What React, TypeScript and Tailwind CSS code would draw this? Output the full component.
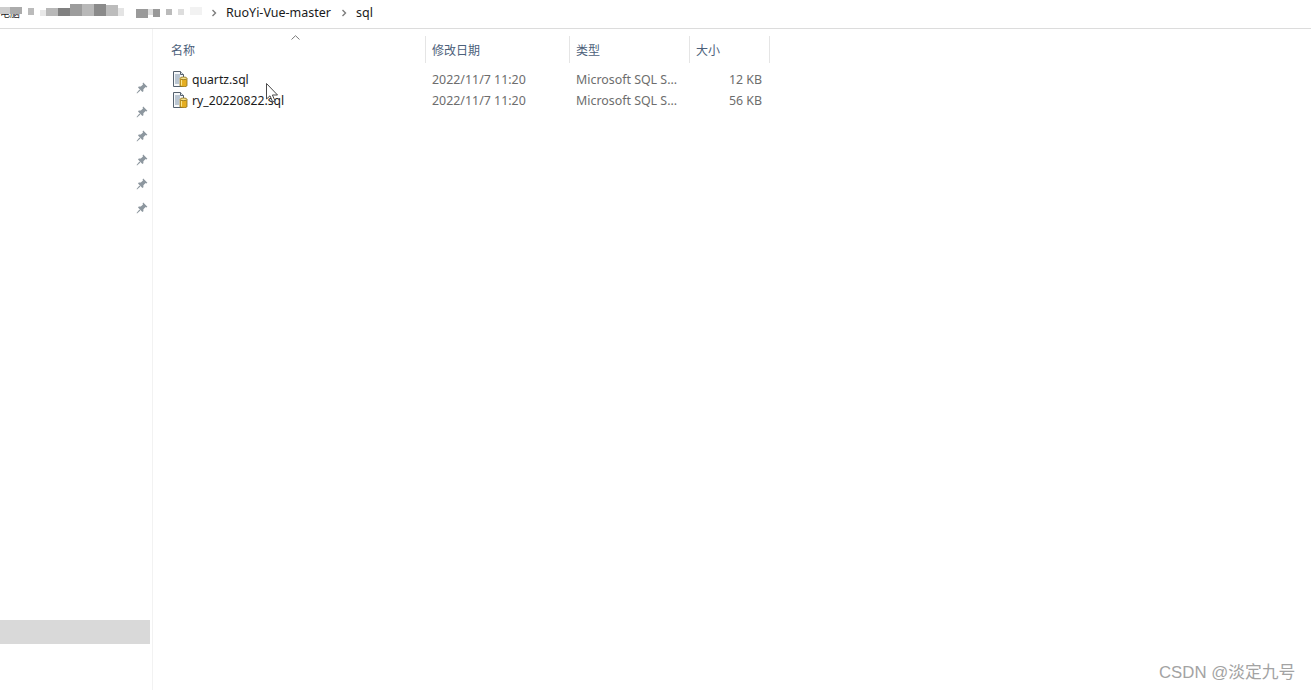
const uiFont = "font-['Noto_Sans','Noto_Sans_CJK_SC',sans-serif]";

const pins = [88, 112, 136, 160, 184, 208];

const files = [
  { name: "quartz.sql", date: "2022/11/7 11:20", kind: "Microsoft SQL S...", size: "12 KB" },
  { name: "ry_20220822.sql", date: "2022/11/7 11:20", kind: "Microsoft SQL S...", size: "56 KB" },
];

function Pin() {
  return (
    <svg width="12" height="12" viewBox="0 0 12 12" className="fill-[#8d979f]">
      <path d="M7.2 0.6 11.4 4.8 10.4 5.4 9.6 5 7.4 7.2 7.4 9.2 6.4 10 2 5.6 2.8 4.6 4.8 4.6 7 2.4 6.6 1.6Z" />
      <path d="M3.4 7.6 4.4 8.6 1 11.4 0.6 11Z" />
    </svg>
  );
}

function SqlIcon() {
  return (
    <svg width="16" height="16" viewBox="0 0 16 16" className="shrink-0">
      <path d="M1.5 0.5H8.5L11.5 3.5V15.5H1.5Z" fill="#f6f8fa" stroke="#55616e" />
      <path d="M3 4H8M3 6H8M3 8H7M3 10H7M3 12H7" stroke="#7f93a8" />
      <path d="M8.5 0.5V3.5H11.5" fill="#dfe6ec" stroke="#55616e" />
      <path d="M8 7.5V14.5C8 15.3 9.6 15.8 11.5 15.8 13.4 15.8 15 15.3 15 14.5V7.5Z" fill="#e5ae22" stroke="#8a6d18" strokeWidth="0.8" />
      <ellipse cx="11.5" cy="7.3" rx="3.5" ry="1.3" fill="#f9e58f" stroke="#8a6d18" strokeWidth="0.8" />
      <path d="M9.5 9V14.5" stroke="#fbe58a" />
    </svg>
  );
}

function Chevron() {
  return (
    <svg width="6" height="8" viewBox="0 0 6 8" className="fill-none stroke-[#7d7d7d] stroke-[1.4]">
      <path d="M1.5 1 4.5 4 1.5 7" />
    </svg>
  );
}

function Mosaic() {
  return (
    <div className="flex h-[28px] w-[207px] shrink-0 items-start">
      <div className="relative mt-[6px] h-[14px] w-[22px]">
        <span className="block text-[10px] leading-[14px] text-[#222] whitespace-nowrap">电脑</span>
        <div className="absolute left-0 top-[1px] flex h-[7px] w-[22px]">
          <div className="w-[10px] bg-[#cdcdcd]" />
          <div className="w-[12px] bg-[#ababab]" />
        </div>
      </div>
      <div className="mt-[8px] ml-[6px] h-[7px] w-[6px] bg-[#bbbbbb]" />
      <div className="mt-[10px] ml-[6px] h-[6px] w-[6px] bg-[#e8e8e8]" />
      <div className="mt-[8px] h-[8px] w-[12px] bg-[#b8b8b8]" />
      <div className="mt-[8px] h-[8px] w-[12px] bg-[#808080]" />
      <div className="mt-[4px] h-[12px] w-[12px] bg-[#9c9c9c]" />
      <div className="mt-[4px] h-[12px] w-[12px] bg-[#b8b8b8]" />
      <div className="mt-[4px] h-[12px] w-[12px] bg-[#8a8a8a]" />
      <div className="mt-[5px] h-[11px] w-[12px] bg-[#bcbcbc]" />
      <div className="mt-[8px] h-[8px] w-[6px] bg-[#e4e4e4]" />
      <div className="ml-[12px] mt-[9px] h-[9px] w-[12px] bg-[#9a9a9a]" />
      <div className="mt-[9px] h-[6px] w-[5px] bg-[#dddddd]" />
      <div className="mt-[9px] h-[8px] w-[7px] bg-[#999999]" />
      <div className="ml-[6px] mt-[9px] h-[6px] w-[6px] bg-[#bbbbbb]" />
      <div className="ml-[6px] mt-[9px] h-[6px] w-[6px] bg-[#dddddd]" />
      <div className="ml-[6px] mt-[7px] h-[8px] w-[12px] bg-[#f2f2f2]" />
    </div>
  );
}

export default function App() {
  return (
    <div className={`relative flex h-[690px] w-[1311px] flex-col overflow-hidden bg-white ${uiFont}`}>
      <header className="flex h-[29px] shrink-0 items-start border-b border-[#dcdcdc]">
        <Mosaic />
        <div className="flex h-[26px] items-center text-[12.5px] text-[#1a1a1a]">
          <span className="ml-[4px] mr-[9px] flex"><Chevron /></span>
          <span>RuoYi-Vue-master</span>
          <span className="ml-[10px] mr-[9px] flex"><Chevron /></span>
          <span>sql</span>
        </div>
      </header>

      <div className="flex min-h-0 flex-1">
        <aside className="relative w-[153px] shrink-0 border-r border-[#f2f2f2]">
          <div className="flex flex-col items-end pt-[47px] pr-[4px]">
            {pins.map((y) => (
              <div key={y} className="flex h-[24px] items-center"><Pin /></div>
            ))}
          </div>
          <div className="absolute left-0 top-[591px] h-[24px] w-[150px] bg-[#d9d9d9]" />
        </aside>

        <main className="flex-1 pt-[7px] text-[12.4px]">
          <div className="relative flex h-[27px] items-center text-[12px] text-[#4c607a]">
            <svg width="9" height="5" viewBox="0 0 9 5" className="absolute left-[138px] top-[-1px] fill-none stroke-[#7a7a7a]">
              <path d="M0.5 4.5 4.5 0.7 8.5 4.5" />
            </svg>
            <div className="h-full w-[273px] border-r border-[#e5e5e5] pl-[18px] leading-[30px]">名称</div>
            <div className="h-full w-[144px] border-r border-[#e5e5e5] pl-[6px] leading-[30px]">修改日期</div>
            <div className="h-full w-[120px] border-r border-[#e5e5e5] pl-[6px] leading-[30px]">类型</div>
            <div className="h-full w-[80px] border-r border-[#e5e5e5] pl-[6px] leading-[30px]">大小</div>
          </div>
          <div className="pt-[6px]">
            {files.map((f) => (
              <div key={f.name} className="flex h-[21px] items-center">
                <div className="flex w-[273px] items-center gap-[4px] pl-[19px] text-[#1a1a1a]">
                  <SqlIcon />
                  <span className="pt-[2px] text-[12.2px]">{f.name}</span>
                </div>
                <div className="w-[144px] pl-[6px] pt-[2px] text-[#6d6d6d]">{f.date}</div>
                <div className="w-[120px] pl-[6px] pt-[2px] text-[#6d6d6d]">{f.kind}</div>
                <div className="w-[72px] pt-[2px] text-right text-[#6d6d6d]">{f.size}</div>
              </div>
            ))}
          </div>
        </main>
      </div>

      {/* mouse cursor */}
      <svg width="13" height="20" viewBox="0 0 13 20" className="absolute left-[266px] top-[83px]">
        <path d="M0.5 0.5V16L4 12.8 6.6 18.8 9 17.8 6.4 12H11.5Z" fill="#fff" stroke="#4a4a4a" />
      </svg>

      <div className="absolute left-[1159px] top-[662px] font-['Liberation_Sans','Noto_Sans_CJK_SC',sans-serif] text-[16.8px] leading-[22px] text-[#a3a3a3]">CSDN @淡定九号</div>
    </div>
  );
}
